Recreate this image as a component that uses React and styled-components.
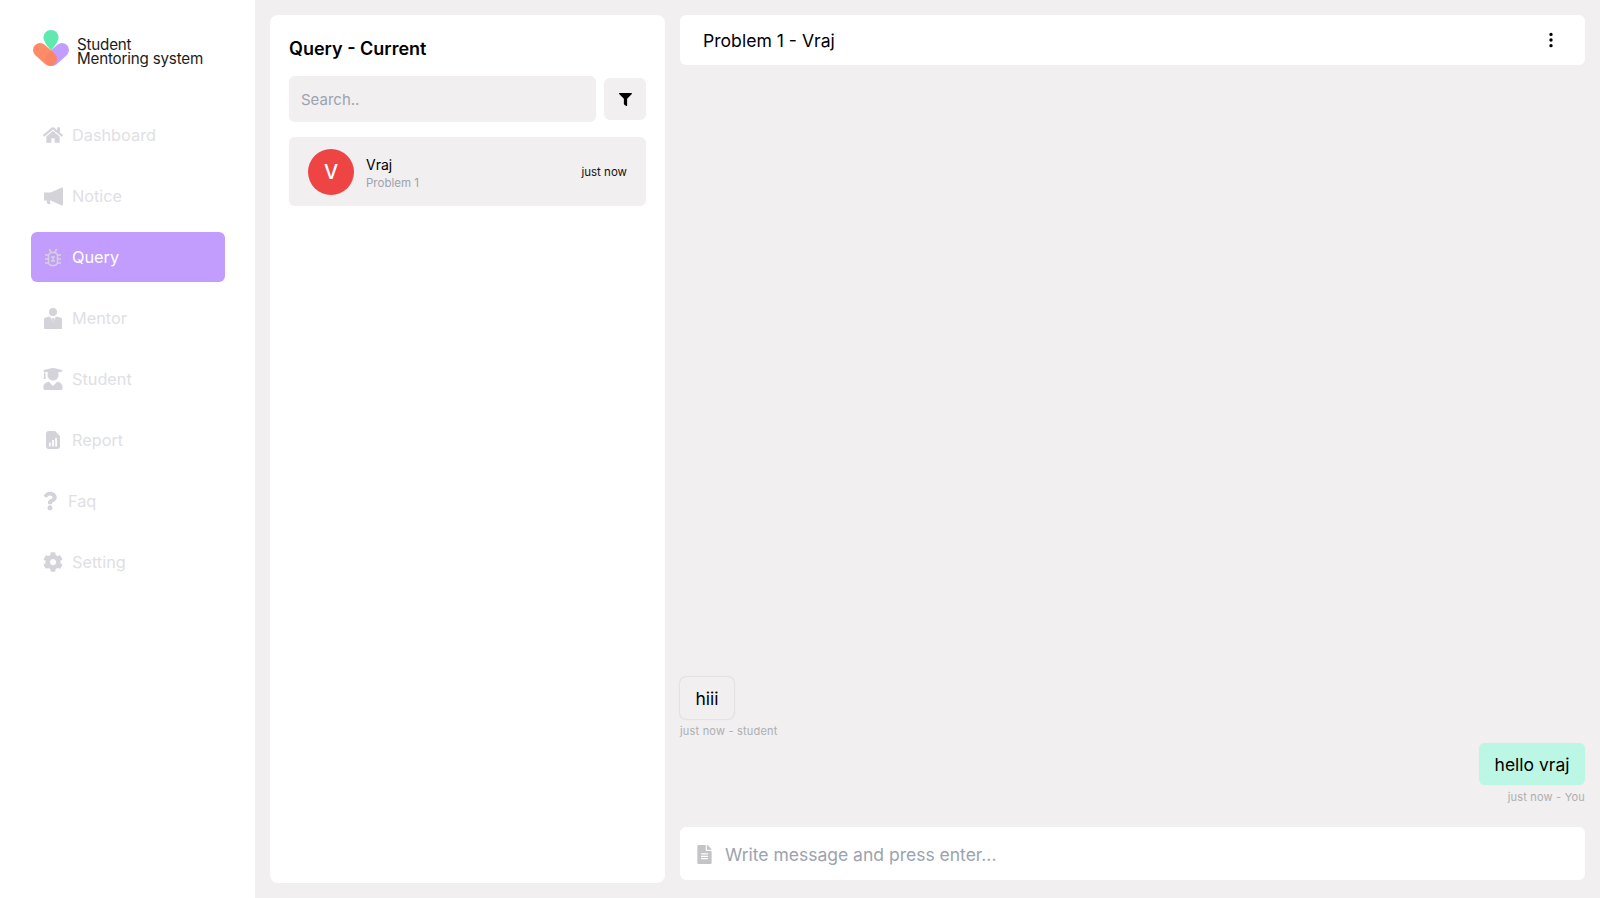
import styled, { createGlobalStyle } from "styled-components"
import { BsThreeDotsVertical } from "react-icons/bs"
import {
  FaCog,
  FaFileAlt,
  FaFilter,
  FaHome,
  FaQuestion,
  FaUserGraduate,
} from "react-icons/fa"

const GlobalStyle = createGlobalStyle`
  * {
    box-sizing: border-box;
  }
  body {
    margin: 0;
    background: #f1eff0;
    font-family: "Inter", "Liberation Sans", sans-serif;
    color: #000;
  }
`

const Page = styled.div`
  display: flex;
  height: 100vh;
  overflow: hidden;
`

const Sidebar = styled.aside`
  width: 255px;
  flex-shrink: 0;
  background: #fff;
  padding: 30px 30px 0 31px;
`

const Brand = styled.div`
  display: flex;
  align-items: center;
  gap: 8px;
  height: 38px;
  margin-left: 2px;
  margin-bottom: 42px;
`

const BrandText = styled.div`
  font-size: 15.2px;
  line-height: 14px;
  letter-spacing: -0.2px;
  color: #1c1c1c;
  padding-top: 6px;
`

const Nav = styled.nav`
  display: flex;
  flex-direction: column;
  gap: 11px;
`

const NavItem = styled.a`
  display: flex;
  align-items: center;
  gap: ${(p) => p.$gap || 9}px;
  height: 50px;
  padding-left: 12px;
  border-radius: 6px;
  font-size: 16.3px;
  color: ${(p) => (p.$active ? "#fff" : "#e0e0e4")};
  background: ${(p) => (p.$active ? "#c39dfd" : "transparent")};
`

const NavIcon = styled.span`
  display: flex;
  align-items: center;
  justify-content: center;
  width: ${(p) => p.$width || 20}px;
  height: 22px;
  font-size: ${(p) => p.$size || 20}px;
  color: ${(p) => (p.$active ? "#d6d3d8" : "#d3d3d9")};
`

const QueryPanel = styled.section`
  width: 395px;
  flex-shrink: 0;
  margin: 15px 0 15px 15px;
  padding: 20px 19px;
  background: #fff;
  border-radius: 8px;
`

const PanelTitle = styled.h2`
  margin: 0 0 14px;
  font-size: 18px;
  line-height: 27px;
  font-weight: 600;
`

const SearchRow = styled.div`
  display: flex;
  align-items: center;
  gap: 8px;
  margin-bottom: 15px;
`

const SearchInput = styled.input`
  flex: 1;
  min-width: 0;
  height: 46px;
  padding: 0 12px;
  border: none;
  border-radius: 6px;
  background: #f1eff0;
  font-family: inherit;
  font-size: 15px;

  &::placeholder {
    color: #9ca3af;
    opacity: 1;
  }
`

const FilterButton = styled.button`
  display: flex;
  align-items: center;
  justify-content: center;
  width: 42px;
  height: 42px;
  padding: 0;
  border: none;
  border-radius: 6px;
  background: #f1eff0;
  font-size: 13px;
  color: #000;
`

const QueryRow = styled.div`
  display: flex;
  align-items: center;
  height: 69px;
  padding: 1px 19px 0;
  border-radius: 6px;
  background: #f1eff0;
`

const Avatar = styled.div`
  display: flex;
  align-items: center;
  justify-content: center;
  width: 46px;
  height: 46px;
  margin-right: 12px;
  border-radius: 50%;
  background: #ef4444;
  color: #fff;
  font-size: 20px;
  font-weight: 500;
`

const QueryInfo = styled.div`
  flex: 1;
`

const QueryName = styled.div`
  font-size: 14px;
  line-height: 21px;
`

const QuerySubject = styled.div`
  font-size: 11.5px;
  line-height: 16px;
  color: #9ca3af;
`

const QueryTime = styled.div`
  font-size: 11.5px;
  color: #111;
`

const ChatColumn = styled.section`
  flex: 1;
  min-width: 0;
  display: flex;
  flex-direction: column;
  margin: 15px 15px 18px 15px;
`

const ChatHeader = styled.header`
  display: flex;
  align-items: center;
  justify-content: space-between;
  height: 50px;
  padding: 0 25px 0 23px;
  background: #fff;
  border-radius: 6px;
  font-size: 17.6px;
`

const MenuButton = styled.span`
  display: flex;
  font-size: 18px;
`

const Messages = styled.div`
  flex: 1;
  display: flex;
  flex-direction: column;
  justify-content: flex-end;
  gap: 4px;
  padding-bottom: 22px;
`

const Message = styled.div`
  display: flex;
  flex-direction: column;
  align-items: ${(p) => (p.$mine ? "flex-end" : "flex-start")};
`

const Bubble = styled.div`
  display: flex;
  align-items: center;
  height: 42px;
  padding: 0 15.5px;
  border-radius: 6px;
  font-size: 17.5px;
  background: ${(p) => (p.$mine ? "#bbf7e4" : "#f1eff0")};
  box-shadow: 0 0 2px rgba(0, 0, 0, ${(p) => (p.$mine ? 0.03 : 0.2)});
`

const MessageMeta = styled.div`
  margin-top: 4px;
  font-size: 11px;
  line-height: 16px;
  letter-spacing: 0.2px;
  color: #aeaeb2;
`

const Composer = styled.div`
  display: flex;
  align-items: center;
  gap: 11px;
  height: 53px;
  padding: 1px 15px 0;
  background: #fff;
  border-radius: 6px;
  font-size: 19px;
  color: #c4c4c8;
`

const ComposerInput = styled.input`
  flex: 1;
  border: none;
  outline: none;
  padding: 0;
  font-family: inherit;
  font-size: 17.5px;

  &::placeholder {
    color: #9ca3af;
    opacity: 1;
  }
`

const MegaphoneIcon = () => (
  <svg width="19" height="19" viewBox="0 0 19 19" fill="currentColor">
    <path d="M0 5.5h6.5L18 .5c.6-.2 1 .2 1 .7v16.600c0 .5-.4.9-1 .7l-11.500-5H5.800l.8 3.500H3.500l-.9-3.500H0z" />
  </svg>
)

const BugIcon = () => (
  <svg
    width="18"
    height="19"
    viewBox="0 0 18 19"
    fill="none"
    stroke="currentColor"
    strokeWidth="1.500"
  >
    <rect x="4.500" y="4.500" width="9" height="13" rx="3.500" />
    <path d="M7 9h4M7 13h4M9 9v4" />
    <path d="M5.500 1l1.500 3.500M12.500 1L11 4.500M1 7h3.500M1 11h3.500M1 15h3.500M13.500 7H17M13.500 11H17M13.500 15H17" />
  </svg>
)

const MentorIcon = () => (
  <svg width="18" height="21" viewBox="0 0 18 21" fill="currentColor">
    <circle cx="9" cy="4" r="4" />
    <path d="M0 11.500C0 10 1 9.500 2.500 9.200L6 8.500l3 6 3-6 3.500.7c1.500.3 2.500.8 2.500 2.300V21H0z" />
    <path d="M8.200 10h1.600l.6 1.500-.5 1-.9 2-.9-2-.5-1z" />
  </svg>
)

const ReportIcon = () => (
  <svg width="14" height="18" viewBox="0 0 14 18" fill="currentColor">
    <path d="M3 0h6l5 5v10a3 3 0 0 1-3 3H3a3 3 0 0 1-3-3V3a3 3 0 0 1 3-3z" />
    <path
      d="M3 11.500h1.800V15.500H3zM6.100 9h1.800v6.500H6.100zM9.200 7H11v8.500H9.200z"
      fill="#fff"
    />
  </svg>
)

const navItems = [
  { label: "Dashboard", icon: <FaHome /> },
  { label: "Notice", icon: <MegaphoneIcon /> },
  { label: "Query", icon: <BugIcon />, active: true },
  { label: "Mentor", icon: <MentorIcon /> },
  { label: "Student", icon: <FaUserGraduate />, size: 22 },
  { label: "Report", icon: <ReportIcon /> },
  { label: "Faq", icon: <FaQuestion />, width: 14, gap: 11 },
  { label: "Setting", icon: <FaCog /> },
]

const Logo = () => (
  <svg width="36" height="38" viewBox="0 0 36 38" fill="none">
    <path
      d="M18 0c4 0 7.500 3.200 7.500 7.300 0 4.700-4.500 9.700-7.500 13-3-3.300-7.500-8.300-7.500-13C10.500 3.200 14 0 18 0z"
      fill="#5fe8b0"
    />
    <path
      d="M29 20l-10 9"
      stroke="#c39dfd"
      strokeWidth="14"
      strokeLinecap="round"
    />
    <path
      d="M7 20l10 9"
      stroke="#ff8259"
      strokeOpacity="0.92"
      strokeWidth="14"
      strokeLinecap="round"
    />
  </svg>
)

const App = () => {
  return (
    <Page>
      <GlobalStyle />
      <Sidebar>
        <Brand>
          <Logo />
          <BrandText>
            Student
            <br />
            Mentoring system
          </BrandText>
        </Brand>
        <Nav>
          {navItems.map((item) => (
            <NavItem key={item.label} $active={item.active} $gap={item.gap}>
              <NavIcon
                $active={item.active}
                $size={item.size}
                $width={item.width}
              >
                {item.icon}
              </NavIcon>
              {item.label}
            </NavItem>
          ))}
        </Nav>
      </Sidebar>

      <QueryPanel>
        <PanelTitle>Query - Current</PanelTitle>
        <SearchRow>
          <SearchInput placeholder="Search.." />
          <FilterButton>
            <FaFilter />
          </FilterButton>
        </SearchRow>
        <QueryRow>
          <Avatar>V</Avatar>
          <QueryInfo>
            <QueryName>Vraj</QueryName>
            <QuerySubject>Problem 1</QuerySubject>
          </QueryInfo>
          <QueryTime>just now</QueryTime>
        </QueryRow>
      </QueryPanel>

      <ChatColumn>
        <ChatHeader>
          Problem 1 - Vraj
          <MenuButton>
            <BsThreeDotsVertical />
          </MenuButton>
        </ChatHeader>
        <Messages>
          <Message>
            <Bubble>hiii</Bubble>
            <MessageMeta>just now - student</MessageMeta>
          </Message>
          <Message $mine>
            <Bubble $mine>hello vraj</Bubble>
            <MessageMeta>just now - You</MessageMeta>
          </Message>
        </Messages>
        <Composer>
          <FaFileAlt />
          <ComposerInput placeholder="Write message and press enter..." />
        </Composer>
      </ChatColumn>
    </Page>
  )
}

export default App
